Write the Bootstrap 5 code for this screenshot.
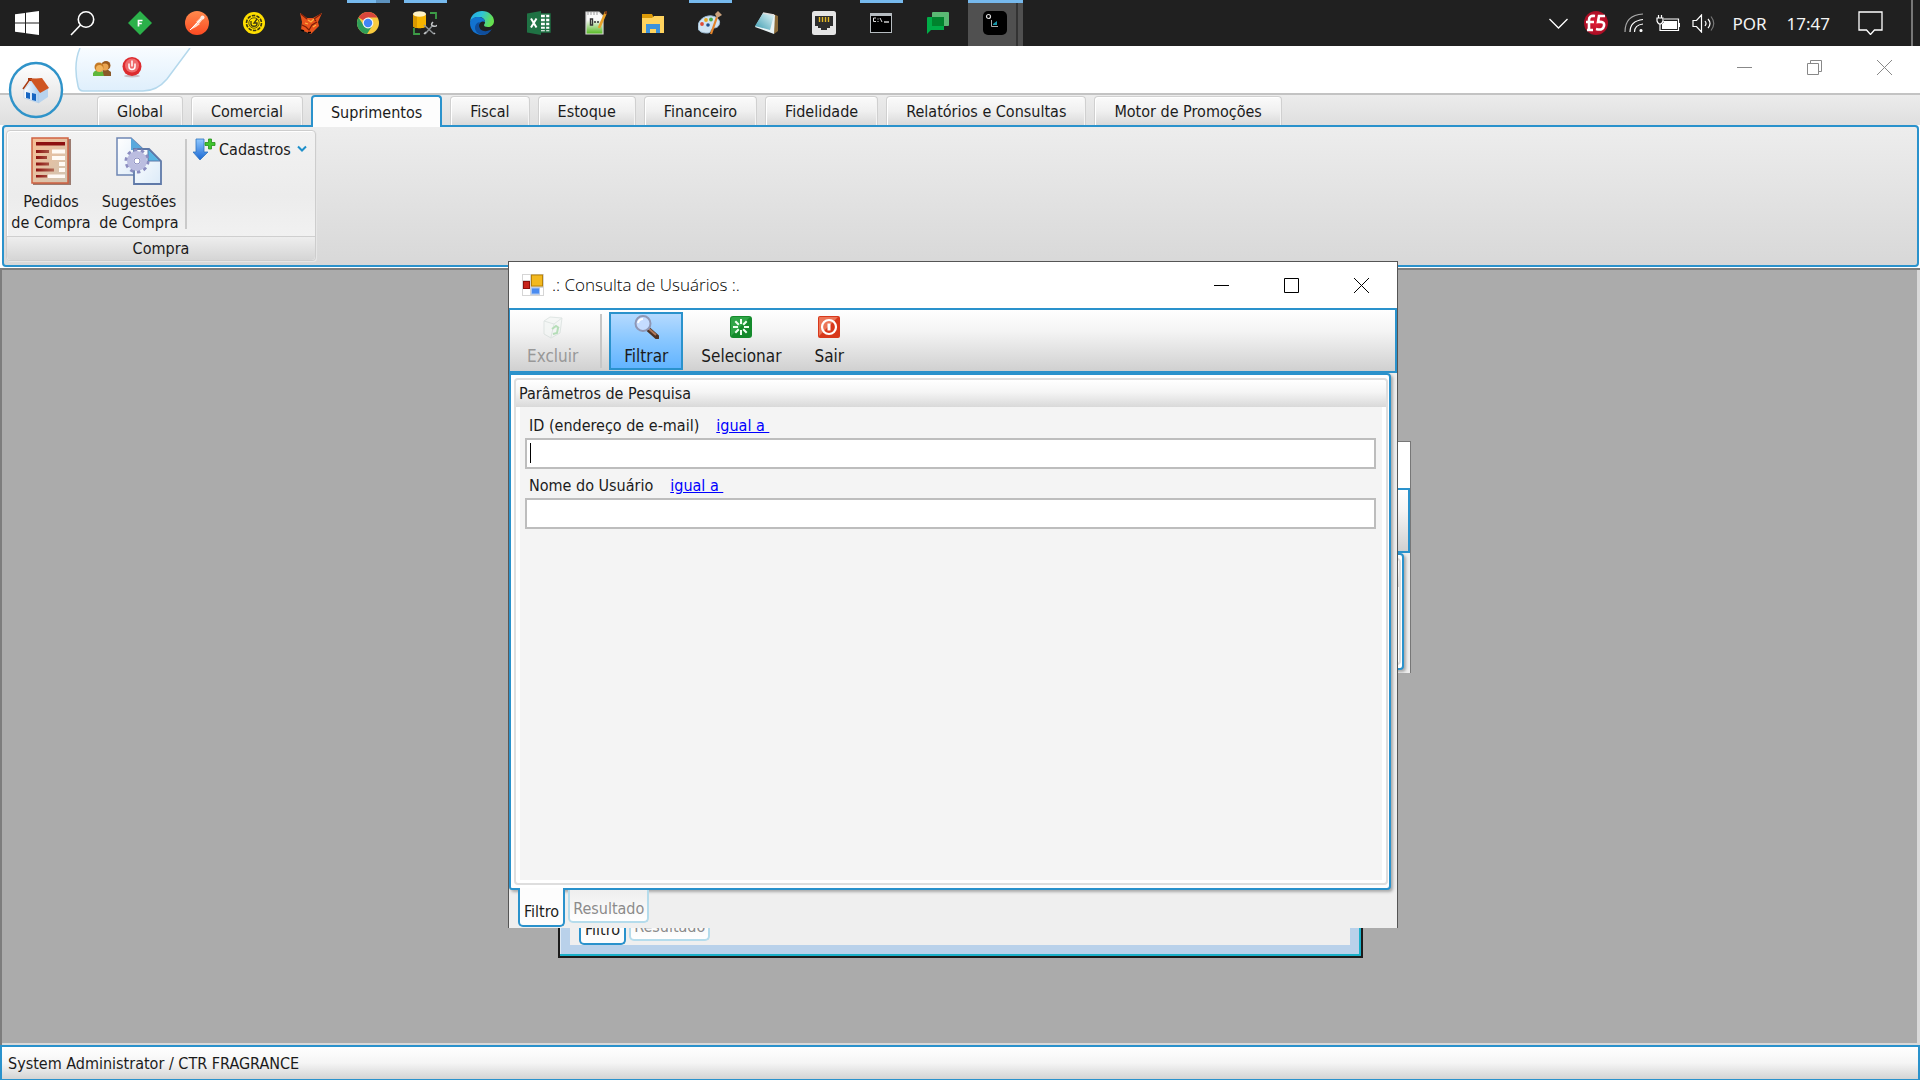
<!DOCTYPE html>
<html lang="pt-BR">
<head>
<meta charset="utf-8">
<meta name="viewport" content="width=device-width, initial-scale=1">
<title>Consulta de Usuários</title>
<link href="https://cdn.jsdelivr.net/npm/bootstrap@5.3.0/dist/css/bootstrap.min.css" rel="stylesheet">
<style>
:root{--edge:#2a92cc;--ink:#1b1b1b}
body{font-family:"DejaVu Sans Condensed","DejaVu Sans",sans-serif;font-size:16px;line-height:21px;color:var(--ink);background:#fff;overflow:hidden}
button{color:inherit;background:none;border:0;padding:0}
svg{display:block;flex:none}
/* taskbar */
.taskbar{height:46px;background:#202020;color:#f4f4f4;font-family:"Noto Sans",sans-serif;font-size:17px}
.slot{width:57px;height:46px;position:relative}
.slot.running::before{content:"";position:absolute;left:8px;right:6px;top:0;height:3px;background:#76b9ed}
.slot.stacked::before{background:linear-gradient(90deg,#76b9ed 29px,#5d92be 29px)}
.slot.current{background:linear-gradient(90deg,transparent 2px,#505050 2px,#505050 50px,#333 50px,#333 52px,#505050 52px)}
.slot.current::before{left:2px;right:0}
.start-slot{width:54px}
.tray{gap:12px;padding-right:1px}
.peek{width:8px;height:46px;border-left:2px solid #777}
/* application frame */
.app-title{height:47px;position:relative}
.quick{position:absolute;left:74px;top:2px}
.orb{position:absolute;left:8px;top:15px;z-index:3}
.win-btns{gap:55px;color:#888}
.app-title .win-btns{padding-bottom:4px}
.tabstrip{height:32px;background:linear-gradient(#ececec,#dfdfdf);border-top:2px solid #c3c3c3;padding-left:97px;gap:8px}
.rtab{height:29px;padding:0 19px;background:linear-gradient(#fbfbfb,#f0f0f0 50%,#d9d9d9);border:1px solid #d0d0d0;border-bottom:0;border-radius:4px 4px 0 0;box-shadow:inset 1px 1px #fff,inset -1px 0 #f4f4f4;white-space:nowrap;line-height:27px}
.rtab.active{position:relative;z-index:2;height:32px;margin-bottom:-2px;padding:0 18px;background:#fdfdfd;border:2px solid var(--edge);border-bottom:0;box-shadow:none}
.ribbon{height:142px;margin:0 1px 0 2px;padding:3px 3px 3px 2px;border:2px solid var(--edge);border-radius:4px;background:linear-gradient(#ededed,#d8d8d8)}
.rgroup{border:1px solid #cdcdcd;border-radius:4px;background:linear-gradient(#f2f2f2,#ececec 50%,#f4f4f4);box-shadow:inset 1px 1px #fff,1px 1px #e6e6e6;width:310px;height:131px}
.rbig{width:88px;padding-top:6px}
.rbig svg{margin-bottom:6px}
.rsep{width:2px;height:90px;margin:8px 6px 0 2px;background:#c9c9c9}
.rsmall{height:22px;margin-top:7px;gap:2px}
.rcap{height:24px;line-height:24px;background:linear-gradient(#eee,#d5d5d5);border-top:1px solid #cfcfcf;border-radius:0 0 4px 4px}
/* workspace and windows */
.desk{margin-top:1px;background:#ababab;box-shadow:inset 2px 2px #7d7d7d,inset -3px -2px #d9d9d9}
.win{position:absolute;background:#efefef}
.win-main{left:508px;top:-7px;width:890px;height:667px;border:1px solid #555;border-bottom:0;z-index:3}
.win-side{left:1200px;top:173px;width:211px;height:232px;border:1px solid #777;border-bottom:0;z-index:1}
.win-under{left:558px;top:559px;width:805px;height:131px;z-index:1;background:#b9d1ea;border:1px solid #1b1b1b;border-width:0 2px 2px;box-shadow:inset -2px -2px #1ab0c8,inset 1px 0 #dfeaf5;padding:0 11px 11px 10px}
.win-head{height:46px;background:#fff;padding-left:13px}
.win-head h1{font-family:"Open Sans","Noto Sans",sans-serif;font-weight:300;font-size:17px;line-height:22px;margin:0;color:#000}
.tools{height:65px;border:2px solid var(--edge);border-left-width:1px;background:linear-gradient(#fff,#f4f4f4 35%,#d0d0d0);padding:2px 0 1px 2px;gap:3px;font-size:17px}
.tool{height:58px;padding:2px 14px 0;border:1px solid transparent;line-height:24px}
.tool svg{height:24px;margin-bottom:5px}
.tool:disabled{color:#989898}
.tool.pressed{background:linear-gradient(#b5daff,#8bc8ff 45%,#62b4ff);border:2px solid var(--edge);padding:1px 13px 0}
.tsep{width:2px;height:54px;background:#c6c6c6;margin:0 4px}
.pane-wrap{padding-right:6px}
.pane{border:2px solid var(--edge);border-radius:0 4px 4px 3px;background:#fff;padding:3px 1px 3px 3px;box-shadow:2px 2px 3px #aaa}
.pane-in{border:2px solid #dedede;border-radius:4px;background:#fff}
.pane-head{height:27px;background:linear-gradient(#fff,#f5f5f5 45%,#d9d9d9);border-radius:4px 4px 0 0;padding-left:3px}
.pane-body{margin:0 4px 3px;background:#f4f4f4;padding:2px 6px 0 5px}
.field-top{height:29px;gap:17px;padding:6px 0 0 4px}
.field-top a{color:#00f;white-space:pre}
.box{height:31px;border:2px solid #bdbdbd;border-radius:0;background:#fff;padding:0 4px;box-shadow:none!important}
.caret{position:absolute;left:5px;top:5px;width:1px;height:20px;background:#000}
.side-body{height:28px}
.btabs{height:40px;padding-left:9px;gap:3px;margin-top:-2px;position:relative;z-index:2}
.btab{background:#fdfdfd;border:2px solid var(--edge);border-top:0;border-radius:0 0 5px 5px;padding:10px 4px 0;height:39px}
.btab.off{height:33px;color:#8b8b8b;border:2px solid #b5dcec;border-top:0;padding:8px 3px 2px;margin-top:2px;background:linear-gradient(#eee,#fff)}
.under-in{background:#efefef}
.under-tabs{padding-left:9px;gap:3px}
.status{height:35px;border:2px solid var(--edge);border-bottom-width:1px;background:linear-gradient(#fff,#f5f5f5 50%,#d4d4d4);padding-left:6px}
</style>
<script src="https://cdn.jsdelivr.net/npm/bootstrap@5.3.0/dist/js/bootstrap.bundle.min.js"></script>
</head>
<body class="d-flex flex-column vh-100">

<nav class="taskbar d-flex align-items-center flex-shrink-0" aria-label="Barra de tarefas">
  <button class="slot start-slot d-flex align-items-center justify-content-center" aria-label="Iniciar">
    <svg width="24" height="24" viewBox="0 0 24 24" fill="#fff"><path d="M0 3.3 10 2v9.500H0zM11 1.800 24 0v11.500H11zM0 12.500h10V22L0 20.700zM11 12.500h13V24l-13-1.800z"/></svg></button>
  <button class="slot d-flex align-items-center justify-content-center" aria-label="Pesquisar">
    <svg width="25" height="25" viewBox="0 0 25 25" fill="none" stroke="#fff" stroke-width="1.600"><circle cx="16" cy="8.500" r="7.700"/><path d="M10.500 14 1 24"/></svg></button>
  <button class="slot d-flex align-items-center justify-content-center" aria-label="F">
    <svg width="24" height="24" viewBox="0 0 24 24"><path d="M12 0 24 12 12 24 0 12z" fill="#2bb14a"/><path d="M10.500 15.500v-6h4M10.500 12.500h3.300" stroke="#fff" stroke-width="1.700" fill="none"/></svg></button>
  <button class="slot d-flex align-items-center justify-content-center" aria-label="Postman">
    <svg width="24" height="24" viewBox="0 0 24 24"><defs><linearGradient id="po" x2="0" y2="1"><stop stop-color="#ff8a4d"/><stop offset="1" stop-color="#fc4a22"/></linearGradient></defs><circle cx="12" cy="12" r="12" fill="url(#po)"/><path d="M5 19l6-7 4 1-4 3zM11 11l5-5 2 2-4 5z" fill="#ffd9c8"/><path d="M5 19 18 6" stroke="#fff" stroke-width="1"/><circle cx="17.500" cy="6.500" r="2" fill="#ffe9e0"/></svg></button>
  <button class="slot d-flex align-items-center justify-content-center" aria-label="Ferramenta">
    <svg width="22" height="22" viewBox="0 0 22 22"><circle cx="11" cy="11" r="11" fill="#ffdf00"/><circle cx="11" cy="11" r="7.500" fill="none" stroke="#3a3510" stroke-width="1.600" stroke-dasharray="3.500 1.200"/><circle cx="11" cy="11" r="5.200" fill="none" stroke="#3a3510" stroke-width=".8"/><path d="M8 9v3c0 3 6 3 6 0v-1h-3l3-4" fill="none" stroke="#3a3510" stroke-width="1.300"/></svg></button>
  <button class="slot d-flex align-items-center justify-content-center" aria-label="FoxPro">
    <svg width="22" height="22" viewBox="0 0 22 22"><path d="M0 1l7 5h6l9-5-4 9 1 4-4 4-4 4-5-2-5-2 1-8z" fill="#e8531c"/><path d="M1 2l6 5M21 2l-7 5 2 2M2 13l4 2 3 3 3-5 5-3" stroke="#7b1f08" stroke-width="1.200" fill="none"/><path d="M8 8l3 2 3-3M5 11l3 1M13 15l3-2" stroke="#ffb23e" stroke-width="1.300" fill="none"/><path d="M1 18l3 1M8 20.500h3" stroke="#000" stroke-width="1.500"/></svg></button>
  <button class="slot running stacked d-flex align-items-center justify-content-center" aria-label="Chrome">
    <svg width="22" height="22" viewBox="0 0 22 22"><circle cx="11" cy="11" r="11" fill="#f9cb3f"/><path d="M11 11 1.500 5.500A11 11 0 0 1 20.500 5.500H11z" fill="#d9463c"/><path d="M1.500 5.500A11 11 0 0 0 10 22l5.500-8.500-4.500 2-4.700-2.700z" fill="#2e9e58"/><circle cx="11" cy="11" r="5.400" fill="#f4f4f4"/><circle cx="11" cy="11" r="4.200" fill="#4285f4"/></svg></button>
  <button class="slot running d-flex align-items-center justify-content-center" aria-label="SQL">
    <svg width="24" height="24" viewBox="0 0 24 24"><path d="M0 3v12c0 3 13 3 13 0V3z" fill="#f5b400"/><path d="M0 3v12q2 2 4 2V5z" fill="#d99800"/><ellipse cx="6.500" cy="3" rx="6.500" ry="2.800" fill="#fff3c4"/><path d="M17 2h6v6M1 17v6h6" fill="none" stroke="#3c9c46" stroke-width="1.800"/><path d="M11 14l10 9M20 14l-8 9" stroke="#8d9295" stroke-width="1.600"/><path d="M20 11q-3 3 0 4t4-1M11 23l2-2M21 23l1-1" stroke="#c3c6c8" stroke-width="1.500" fill="none"/></svg></button>
  <button class="slot d-flex align-items-center justify-content-center" aria-label="Edge">
    <svg width="24" height="24" viewBox="0 0 24 24"><defs><linearGradient id="ed" x2="1" y2=".3"><stop stop-color="#21a5e8"/><stop offset=".5" stop-color="#2fc3d8"/><stop offset="1" stop-color="#66e04f"/></linearGradient></defs><path d="M0 12C0 4 6 0 12 0c7 0 12 5 12 10 0 4-3 6-6 6-3 0-4-1-4-2s1-1 1-3c0-3-3-5-6-5-5 0-9 3-9 6z" fill="url(#ed)"/><path d="M0 12c0-4 4-6 8-6 4 0 7 2 7 5-1-1-6-1-6 4 0 4 4 8 9 7-2 1.500-4 2-6 2C5 24 0 19 0 12z" fill="#1273d0"/><path d="M9 15c0 5 7 7 13 3-2 3-5 6-9 6-5 0-8-4-8-7 0-4 3-6 5-6-1 1-1 2-1 4z" fill="#0f4e9c"/></svg></button>
  <button class="slot d-flex align-items-center justify-content-center" aria-label="Excel">
    <svg width="24" height="24" viewBox="0 0 24 24"><path d="M12 3h11v18H12z" fill="#fff" stroke="#1f7244" stroke-width="1.400"/><path d="M14 7h9M14 11h9M14 15h9M14 18.500h9M18.500 4v17" stroke="#1f7244" stroke-width="1.300"/><path d="M0 2.500 14 0v24L0 21.500z" fill="#1f7244"/><path d="M4 7.500l5.500 9M9.500 7.500 4 16.500" stroke="#fff" stroke-width="2"/></svg></button>
  <button class="slot d-flex align-items-center justify-content-center" aria-label="Notepad++">
    <svg width="22" height="24" viewBox="0 0 22 24"><defs><linearGradient id="np" x2="0" y2="1"><stop offset=".35" stop-color="#fafafa"/><stop offset="1" stop-color="#52b81e"/></linearGradient></defs><path d="M1 1h13l4 4v18H1z" fill="url(#np)" stroke="#d5d5d5" stroke-width="1.200"/><path d="M3 1v3M6 1v3M9 1v3M12 1v3" stroke="#999"/><path d="M5.500 8v6h2V8zM9 11h2M12 11h2" fill="none" stroke="#333" stroke-width="1.400"/><path d="M21 1 14 17" stroke="#e8a12a" stroke-width="2.600"/><path d="M22 0l-1.500 3" stroke="#7b3a16" stroke-width="2.600"/></svg></button>
  <button class="slot d-flex align-items-center justify-content-center" aria-label="Explorador de Arquivos">
    <svg width="22" height="19" viewBox="0 0 22 19"><path d="M0 0h10l1 2v4H0z" fill="#dc9a08"/><path d="M0 4h10l2-2h10v17H0z" fill="#ffd35e"/><path d="M4 19v-9h14v9h-4v-4H8v4z" fill="#3c92dc"/></svg></button>
  <button class="slot running d-flex align-items-center justify-content-center" aria-label="Paint">
    <svg width="24" height="24" viewBox="0 0 24 24"><path d="M0 16C0 8 8 4 14 5s9 5 7 9-5 2-7 4-1 4-5 4-9-1-9-6z" fill="#cfe4f3" stroke="#9dbbd2"/><circle cx="4" cy="13" r="1.900" fill="#e04c35"/><circle cx="8" cy="9" r="1.900" fill="#e6a823"/><circle cx="13" cy="8.500" r="1.900" fill="#48a942"/><circle cx="10" cy="14" r="1.800" fill="#1f4f8d"/><path d="M19 6 13 23" stroke="#e4842a" stroke-width="2.200"/><path d="M17 3l3-3 4 4-5 3z" fill="#caa27c"/></svg></button>
  <button class="slot d-flex align-items-center justify-content-center" aria-label="Bloco de Notas">
    <svg width="24" height="22" viewBox="0 0 24 22"><defs><linearGradient id="nb" x1="1" x2="0" y2="1"><stop stop-color="#e5f7fa"/><stop offset="1" stop-color="#3b9bb0"/></linearGradient></defs><path d="M18 2l5 2v15l-4 3z" fill="#8b6b3a"/><path d="M8 1l12 2-1 19L0 15z" fill="#e9f3f5"/><path d="M8 1l11 2-4 15L0 14z" fill="url(#nb)"/><path d="M8 1l11 2" stroke="#ddd" stroke-width="1.500"/></svg></button>
  <button class="slot d-flex align-items-center justify-content-center" aria-label="Rede">
    <svg width="24" height="24" viewBox="0 0 24 24"><rect width="24" height="24" rx="2.500" fill="#e5e5e5"/><path d="M3 5h18v10h-3v2h-3v2H9v-2H6v-2H3z" fill="#2d2d2d"/><path d="M7.500 6v5M10.500 6v5M13.500 6v5M16.500 6v5" stroke="#e5b823" stroke-width="1.400"/></svg></button>
  <button class="slot running d-flex align-items-center justify-content-center" aria-label="Prompt">
    <svg width="22" height="20" viewBox="0 0 22 20"><rect width="22" height="20" fill="#b6bcc0"/><rect x="1" y="3" width="20" height="16" fill="#000"/><path d="M6 5H3.500v3.500H6M8 5.500v1M8 8v1M10 5l2 4" stroke="#ddd" fill="none"/><path d="M14 9h5" stroke="#fff" stroke-width="1.200"/></svg></button>
  <button class="slot d-flex align-items-center justify-content-center" aria-label="Chat">
    <svg width="22" height="22" viewBox="0 0 22 22"><path d="M6 0h15q1 0 1 1v12q0 1-1 1H5V1q0-1 1-1z" fill="#5bb974"/><path d="M1 5h16v13H4l-4 4V6q0-1 1-1z" fill="#00ac47"/><path d="M5 5h12v9H5z" fill="#00832d"/></svg></button>
  <button class="slot running current d-flex align-items-center justify-content-center" aria-label="Sistema">
    <svg width="24" height="24" viewBox="0 0 24 24"><rect width="24" height="24" rx="5" fill="#000"/><circle cx="5.500" cy="5.500" r="2" fill="none" stroke="#ddd" stroke-width="1.200"/><path d="M8.500 9v6.500h6.500" stroke="#aaa" fill="none"/><path d="M10 13l4-3v4h-4z" fill="#1797ab"/></svg></button>
  <div class="tray d-flex align-items-center ms-auto">
    <svg width="19" height="11" viewBox="0 0 19 11" fill="none" stroke="#fff" stroke-width="1.300"><path d="M.5 1l9 9 9-9"/></svg>
    <svg class="ms-1" width="24" height="24" viewBox="0 0 24 24"><defs><radialGradient id="f5"><stop stop-color="#e21d38"/><stop offset="1" stop-color="#a80d24"/></radialGradient></defs><circle cx="12" cy="12" r="12" fill="url(#f5)"/><path d="M2 11h8M5 19V9q0-5 6-4M3 19h6M21 5h-6l-1 6q7-1 6 4t-8 3" fill="none" stroke="#fff" stroke-width="2.600"/></svg>
    <svg class="ms-1" width="20" height="20" viewBox="0 0 20 20" fill="none" stroke="#fff" stroke-width="1.200"><path d="M1 19Q1 2 19 1" stroke="#aaa"/><path d="M6 19Q6 8 19 6.500M10.500 19q0-7 8.500-8"/><circle cx="17" cy="17.500" r="1" fill="#fff"/></svg>
    <svg width="24" height="17" viewBox="0 0 24 17" fill="none" stroke="#fff" stroke-width="1.200"><path d="M2.500 0v3M5.500 0v3M1 3h6v3q-1 3-3 3T1 6zM4 9v6.500h18.500V4H8M23.500 8v4"/><path d="M6 6h15v8H6V9l2-2z" fill="#fff" stroke="none"/></svg>
    <svg width="24" height="19" viewBox="0 0 24 19" fill="none" stroke="#fff" stroke-width="1.200"><path d="M1 6.500h3.500L9.500 1v17l-5-5.500H1zM13 7q2 2.500 0 5M16 5q4 4.500 0 9"/><path d="M19 2.500q5.500 7 0 14" stroke="#777"/></svg>
    <span class="ms-1">POR</span>
    <time class="ms-2">17:47</time>
    <svg class="ms-3" width="25" height="24" viewBox="0 0 25 24" fill="none" stroke="#fff" stroke-width="1.300"><path d="M1 1h23v18h-7.500l-4 4.500L8.500 19H1z"/></svg>
    <div class="peek ms-3"></div>
  </div>
</nav>

<header class="flex-shrink-0">
  <div class="app-title d-flex justify-content-end">
    <div class="quick">
      <svg width="118" height="44" viewBox="0 0 118 44"><defs><linearGradient id="qa" x2="0" y2="1"><stop stop-color="#f8fcff"/><stop offset="1" stop-color="#dfeffc"/></linearGradient></defs><path d="M6 0Q-1 16 4 38 5 43 9 43h60q14 0 24-12L116 0" fill="url(#qa)" stroke="#b4d8ec" stroke-width="1.500"/>
      <g transform="translate(19 12)"><path d="M0 16v-3q3-4 8-3l4 4v2z" fill="#5fb73c"/><path d="M9 9q5-1 9 3v4h-7z" fill="#8b5a2a"/><circle cx="13" cy="5.500" r="4.500" fill="#9a5a1d"/><circle cx="12" cy="7" r="3.500" fill="#e9a450"/><circle cx="6" cy="7" r="4.500" fill="#c47a25"/><circle cx="6.500" cy="8.500" r="3.500" fill="#f2b45c"/></g>
      <g transform="translate(48 9)"><ellipse cx="10" cy="19" rx="8" ry="1.500" fill="#c9bfc6"/><circle cx="10" cy="9.500" r="9.500" fill="#dd2b2f"/><circle cx="10" cy="8.500" r="7" fill="#ef6a6c"/><path d="M7 6.500v3a3 3 0 0 0 6 0v-3M10 3.500v6" fill="none" stroke="#fff" stroke-width="1.500"/></g></svg>
    </div>
    <button class="orb" aria-label="Menu principal">
      <svg width="56" height="58" viewBox="0 0 56 58"><defs><linearGradient id="ob" x2="0" y2="1"><stop stop-color="#fff"/><stop offset="1" stop-color="#dcdcdc"/></linearGradient><linearGradient id="hw"><stop stop-color="#fff"/><stop offset="1" stop-color="#a9cdf0"/></linearGradient></defs><ellipse cx="28" cy="29" rx="26" ry="27" fill="url(#ob)" stroke="#2f93c9" stroke-width="2.400"/><path d="M16 29l7-9 8 10v12l-15-5z" fill="url(#hw)" stroke="#b0cbe4" stroke-width=".6"/><path d="M31 30l9-3v9l-9 6z" fill="#b7d3ee"/><path d="M20 20v-3h4v3z" fill="#a83b12"/><path d="M15 28l7-10 9 1" fill="none" stroke="#a83b12" stroke-width="1.500"/><path d="M22 18l12-1 7 10-9 5z" fill="#cf5522"/><path d="M18 31l4 1v6l-4-1z" fill="#1766c2"/><path d="M24 32l4 1v7l-4-1z" fill="#1766c2"/></svg></button>
    <div class="win-btns d-flex align-items-center pe-4 me-1" role="group" aria-label="Janela">
      <button aria-label="Minimizar"><svg width="15" height="15" viewBox="0 0 15 15" stroke="currentColor"><path d="M0 7.500h15"/></svg></button>
      <button aria-label="Restaurar"><svg width="15" height="15" viewBox="0 0 15 15" fill="none" stroke="currentColor"><path d="M.5 3.500h11v11H.5zM3.500 3.500v-3h11v11h-3"/></svg></button>
      <button aria-label="Fechar"><svg width="15" height="15" viewBox="0 0 15 15" stroke="currentColor"><path d="M0 0l15 15M15 0 0 15"/></svg></button>
    </div>
  </div>
  <nav class="tabstrip d-flex align-items-end" aria-label="Módulos">
    <button class="rtab">Global</button>
    <button class="rtab">Comercial</button>
    <button class="rtab active">Suprimentos</button>
    <button class="rtab">Fiscal</button>
    <button class="rtab">Estoque</button>
    <button class="rtab">Financeiro</button>
    <button class="rtab">Fidelidade</button>
    <button class="rtab">Relatórios e Consultas</button>
    <button class="rtab">Motor de Promoções</button>
  </nav>
  <section class="ribbon">
    <div class="rgroup d-flex flex-column">
      <div class="d-flex flex-fill align-items-start">
        <button class="rbig d-flex flex-column align-items-center">
          <svg width="40" height="48" viewBox="0 0 40 48"><defs><linearGradient id="pc" x2="1" y2="1"><stop stop-color="#f7bd94"/><stop offset="1" stop-color="#cfc5b4"/></linearGradient><linearGradient id="rd"><stop stop-color="#8d1010"/><stop offset="1" stop-color="#b06a55"/></linearGradient></defs><path d="M2 2h38v46H2z" fill="#9b7b70"/><path d="M1 1h36v45H1z" fill="url(#pc)" stroke="#cf6242" stroke-width="1.500"/><path d="M5 5h29v3.500H5z" fill="#8d1010"/><path d="M5 13h13v3H5zM5 19h11v3H5zM5 25.500h13v3H5zM5 31.500h18v3H5zM5 38h11v2.500H5z" fill="url(#rd)"/><path d="M21 12.500h13v4H21zM21 19h13v4H21zM28 25h6v4h-6zM28 31h6v4h-6zM17 37.500h17v3.500H17z" fill="#fffaf5"/></svg>
          <span>Pedidos<br>de Compra</span></button>
        <button class="rbig d-flex flex-column align-items-center">
          <svg width="46" height="48" viewBox="0 0 46 48"><defs><linearGradient id="pg" x2="1" y2="1"><stop stop-color="#fff"/><stop offset="1" stop-color="#dbeaf8"/></linearGradient></defs><path d="M1 1h14l13 12v25H1z" fill="url(#pg)" stroke="#6f86b4" stroke-width="1.500"/><path d="M15 1v12h13z" fill="#58a9dd"/><path d="M18 12h15l12 12v23H18z" fill="url(#pg)" stroke="#5f79a8" stroke-width="1.800"/><path d="M32 12v12h12z" fill="#58b4e2" stroke="#5f79a8"/><circle cx="21" cy="24" r="10.500" fill="none" stroke="#8b8dc0" stroke-width="4" stroke-dasharray="3.300 3.300"/><circle cx="21" cy="24" r="6.800" fill="#e9ebf8" stroke="#bbbde0" stroke-width="6.500"/><circle cx="21" cy="24" r="3" fill="#fff" stroke="#8b8dc0"/></svg>
          <span>Sugestões<br>de Compra</span></button>
        <div class="rsep"></div>
        <button class="rsmall d-flex align-items-center">
          <svg width="24" height="22" viewBox="0 0 24 22"><defs><linearGradient id="ar" x2="0" y2="1"><stop stop-color="#8fc8ff"/><stop offset="1" stop-color="#1a67d2"/></linearGradient></defs><path d="M3 1h8v13h4l-8 8-7-8h3z" fill="url(#ar)" stroke="#2f74bf" stroke-width=".8"/><path d="M15.500 1h3v3.500H22v3h-3.500V11h-3V7.500H12v-3h3.500z" fill="#3fc52d" stroke="#258f1b" stroke-width=".8"/></svg>
          <span>Cadastros</span>
          <svg class="ms-1" width="10" height="8" viewBox="0 0 10 8" fill="none" stroke="#1e8fca" stroke-width="2"><path d="M1 1.500l4 4 4-4"/></svg></button>
      </div>
      <div class="rcap text-center">Compra</div>
    </div>
  </section>
</header>

<main class="desk flex-fill position-relative">
  <section class="win win-side" aria-hidden="true">
    <div class="win-head"></div>
    <div class="d-flex flex-column">
      <div class="tools flex-shrink-0"></div>
      <div class="pane-wrap"><div class="pane"><div class="pane-in pb-5"><div class="pane-head"></div><div class="side-body"></div></div></div></div>
    </div>
  </section>

  <section class="win win-under d-flex" aria-label="Janela anterior">
    <div class="under-in flex-fill d-flex align-items-end">
      <div class="under-tabs d-flex align-items-start">
        <button class="btab">Filtro</button>
        <button class="btab off">Resultado</button>
      </div>
    </div>
  </section>

  <section class="win win-main d-flex flex-column" role="dialog" aria-labelledby="dlg">
    <div class="win-head d-flex align-items-center flex-shrink-0">
      <svg width="22" height="22" viewBox="0 0 22 22"><path d="M0 0h22v22H0z" fill="#d5d5d5"/><path d="M1 1h7v5H1zM1 15h7v6H1zM18 14h3v7h-3z" fill="#fff"/><rect x="9.500" y="1" width="11" height="11" fill="#f3b91f" stroke="#b88208"/><rect x="1.500" y="7.500" width="6" height="7" fill="#c8241b" stroke="#8d120d"/><rect x="9.500" y="14" width="8" height="6" fill="#4a8bf0" stroke="#a8c6f5"/></svg>
      <h1 id="dlg" class="ms-2">.: Consulta de Usuários :.</h1>
      <div class="win-btns d-flex align-items-center ms-auto pe-4 me-1 text-black">
        <button aria-label="Minimizar"><svg width="15" height="15" viewBox="0 0 15 15" stroke="currentColor"><path d="M0 7.500h15"/></svg></button>
        <button aria-label="Maximizar"><svg width="15" height="15" viewBox="0 0 15 15" fill="none" stroke="currentColor"><path d="M.5.5h14v14H.5z"/></svg></button>
        <button aria-label="Fechar"><svg width="15" height="15" viewBox="0 0 15 15" stroke="currentColor"><path d="M0 0l15 15M15 0 0 15"/></svg></button>
      </div>
    </div>
    <div class="tools d-flex align-items-center flex-shrink-0" role="toolbar">
      <button class="tool d-flex flex-column align-items-center" disabled>
        <svg width="22" height="22" viewBox="0 0 22 22" opacity=".6"><path d="M2 5l6-4 12 1-2 15-9 5-7-4z" fill="#f2f6f4" stroke="#cfd9d6"/><path d="M2 5l10 3 8-6M12 8l-3 13" fill="none" stroke="#cfd9d6"/><path d="M10 13l4-3 3 2M16 12l-1 5-4 1" fill="none" stroke="#8ccf90" stroke-width="2"/></svg>
        Excluir</button>
      <div class="tsep"></div>
      <button class="tool pressed d-flex flex-column align-items-center">
        <svg width="26" height="24" viewBox="0 0 26 24"><path d="M15 14l9 8" stroke="#4d3325" stroke-width="5" stroke-linecap="round"/><path d="M15 13l8 7" stroke="#b0785a" stroke-width="2"/><circle cx="10" cy="8.500" r="7.500" fill="#c5dcff" stroke="#8f97b5" stroke-width="2"/><path d="M5 8q1-4 5-4" fill="none" stroke="#fff" stroke-width="2"/></svg>
        Filtrar</button>
      <button class="tool d-flex flex-column align-items-center">
        <svg width="22" height="22" viewBox="0 0 22 22"><rect width="22" height="22" rx="3" fill="#148a2c"/><path d="M1 20V3q0-2 2-2h17z" fill="#2fa547"/><path d="M11 3v5M11 14v5M3 11h5M14 11h5M5.300 5.300l3.500 3.500M13.200 13.200l3.500 3.500M16.700 5.300l-3.500 3.500M8.800 13.200l-3.500 3.500" stroke="#f0fff2" stroke-width="2"/></svg>
        Selecionar</button>
      <button class="tool d-flex flex-column align-items-center">
        <svg width="22" height="22" viewBox="0 0 22 22"><rect width="22" height="22" rx="2" fill="#d8381b"/><path d="M1 20V2q0-1 1-1h18z" fill="#ec7658"/><circle cx="11" cy="11" r="7" fill="none" stroke="#fff" stroke-width="2.200"/><path d="M11 7.500v7" stroke="#fff" stroke-width="3"/></svg>
        Sair</button>
    </div>
    <div class="pane-wrap flex-fill d-flex">
      <div class="pane flex-fill d-flex">
        <div class="pane-in flex-fill d-flex flex-column">
          <div class="pane-head d-flex align-items-center">Parâmetros de Pesquisa</div>
          <form class="pane-body flex-fill" autocomplete="off">
            <div class="field-top d-flex"><label for="mail">ID (endereço de e-mail)</label><a href="#">igual a </a></div>
            <div class="position-relative"><input id="mail" class="box form-control" type="text"><span class="caret"></span></div>
            <div class="field-top d-flex"><label for="nome">Nome do Usuário</label><a href="#">igual a </a></div>
            <input id="nome" class="box form-control" type="text">
          </form>
        </div>
      </div>
    </div>
    <div class="btabs d-flex align-items-start flex-shrink-0">
      <button class="btab">Filtro</button>
      <button class="btab off">Resultado</button>
    </div>
  </section>
</main>

<footer class="status d-flex align-items-center flex-shrink-0">System Administrator / CTR FRAGRANCE</footer>
</body>
</html>
